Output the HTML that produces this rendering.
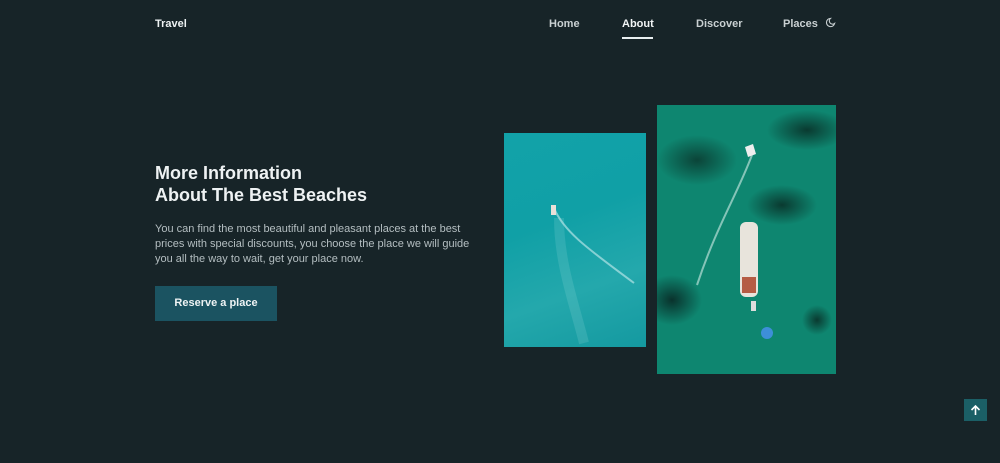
<!DOCTYPE html>
<html><head><style>
*{margin:0;padding:0;box-sizing:border-box}
body{width:1000px;height:463px;background:#172428;font-family:"Liberation Sans",sans-serif;position:relative;overflow:hidden}
.a{position:absolute}
.nav{font-size:11px;font-weight:bold;color:#c9d0d2;top:18px}
</style></head><body>
<div class="a nav" style="left:155px;color:#eef2f3">Travel</div>
<div class="a nav" style="left:549px">Home</div>
<div class="a nav" style="left:622px;color:#f2f5f6">About</div>
<div class="a" style="left:622px;top:37px;width:31px;height:2px;background:#e8eef0"></div>
<div class="a nav" style="left:696px">Discover</div>
<div class="a nav" style="left:783px">Places</div>
<svg class="a" style="left:825px;top:17px" width="11" height="11" viewBox="0 0 12 12"><path d="M6 1.5A4.5 4.5 0 1 0 10.5 7 3.5 3.5 0 0 1 6 1.5z" fill="none" stroke="#c9d0d2" stroke-width="1.2"/></svg>
<div class="a" style="left:155px;top:162px;color:#eef2f3;font-size:18px;font-weight:bold;line-height:22px">More Information<br>About The Best Beaches</div>
<div class="a" style="left:155px;top:222px;width:330px;color:#b4bec1;font-size:11px;line-height:15px">You can find the most beautiful and pleasant places at the best prices with special discounts, you choose the place we will guide you all the way to wait, get your place now.</div>
<div class="a" style="left:155px;top:286px;width:122px;height:35px;background:#1b5361;color:#eef3f4;font-size:11px;font-weight:bold;text-align:center;line-height:35px">Reserve a place</div>
<div class="a" style="left:504px;top:133px;width:142px;height:214px;background:linear-gradient(160deg,#12a2a9,#10a0a6 40%,#24a8ac 70%,#1499a0)">
<svg width="142" height="214" class="a"><path d="M50 75 C60 100,90 120,130 150" stroke="#cdeff0" stroke-width="2" fill="none" opacity=".6"/><path d="M55 85 C55 130,70 170,80 210" stroke="#bde8ea" stroke-width="10" fill="none" opacity=".15"/><rect x="47" y="72" width="5" height="10" fill="#e8e0d8"/></svg></div>
<div class="a" style="left:657px;top:105px;width:179px;height:269px;background:radial-gradient(ellipse 40px 25px at 40px 55px,#0b4438,transparent),radial-gradient(ellipse 35px 20px at 125px 100px,#0a3a30,transparent),radial-gradient(ellipse 30px 25px at 15px 195px,#09322c,transparent),radial-gradient(ellipse 40px 20px at 150px 25px,#0a3a30,transparent),radial-gradient(ellipse 15px 15px at 160px 215px,#0a3a30,transparent),#0e8670">
<svg width="179" height="269" class="a"><path d="M95 50 C80 90,60 120,40 180" stroke="#d3efe8" stroke-width="2" fill="none" opacity=".6"/><rect x="83" y="117" width="18" height="75" rx="6" fill="#e8e4dc"/><rect x="85" y="172" width="14" height="16" fill="#b55c44"/><path d="M88 42 l8 -3 l3 10 l-8 3z" fill="#eee"/><circle cx="110" cy="228" r="6" fill="#3d8fd8"/><rect x="94" y="196" width="5" height="10" fill="#ddd"/></svg></div>
<div class="a" style="left:964px;top:399px;width:23px;height:22px;background:#1b5f66"><svg width="23" height="22"><path d="M11.5 16V7M7.5 11l4-4 4 4" stroke="#fff" stroke-width="1.6" fill="none"/></svg></div>
</body></html>
